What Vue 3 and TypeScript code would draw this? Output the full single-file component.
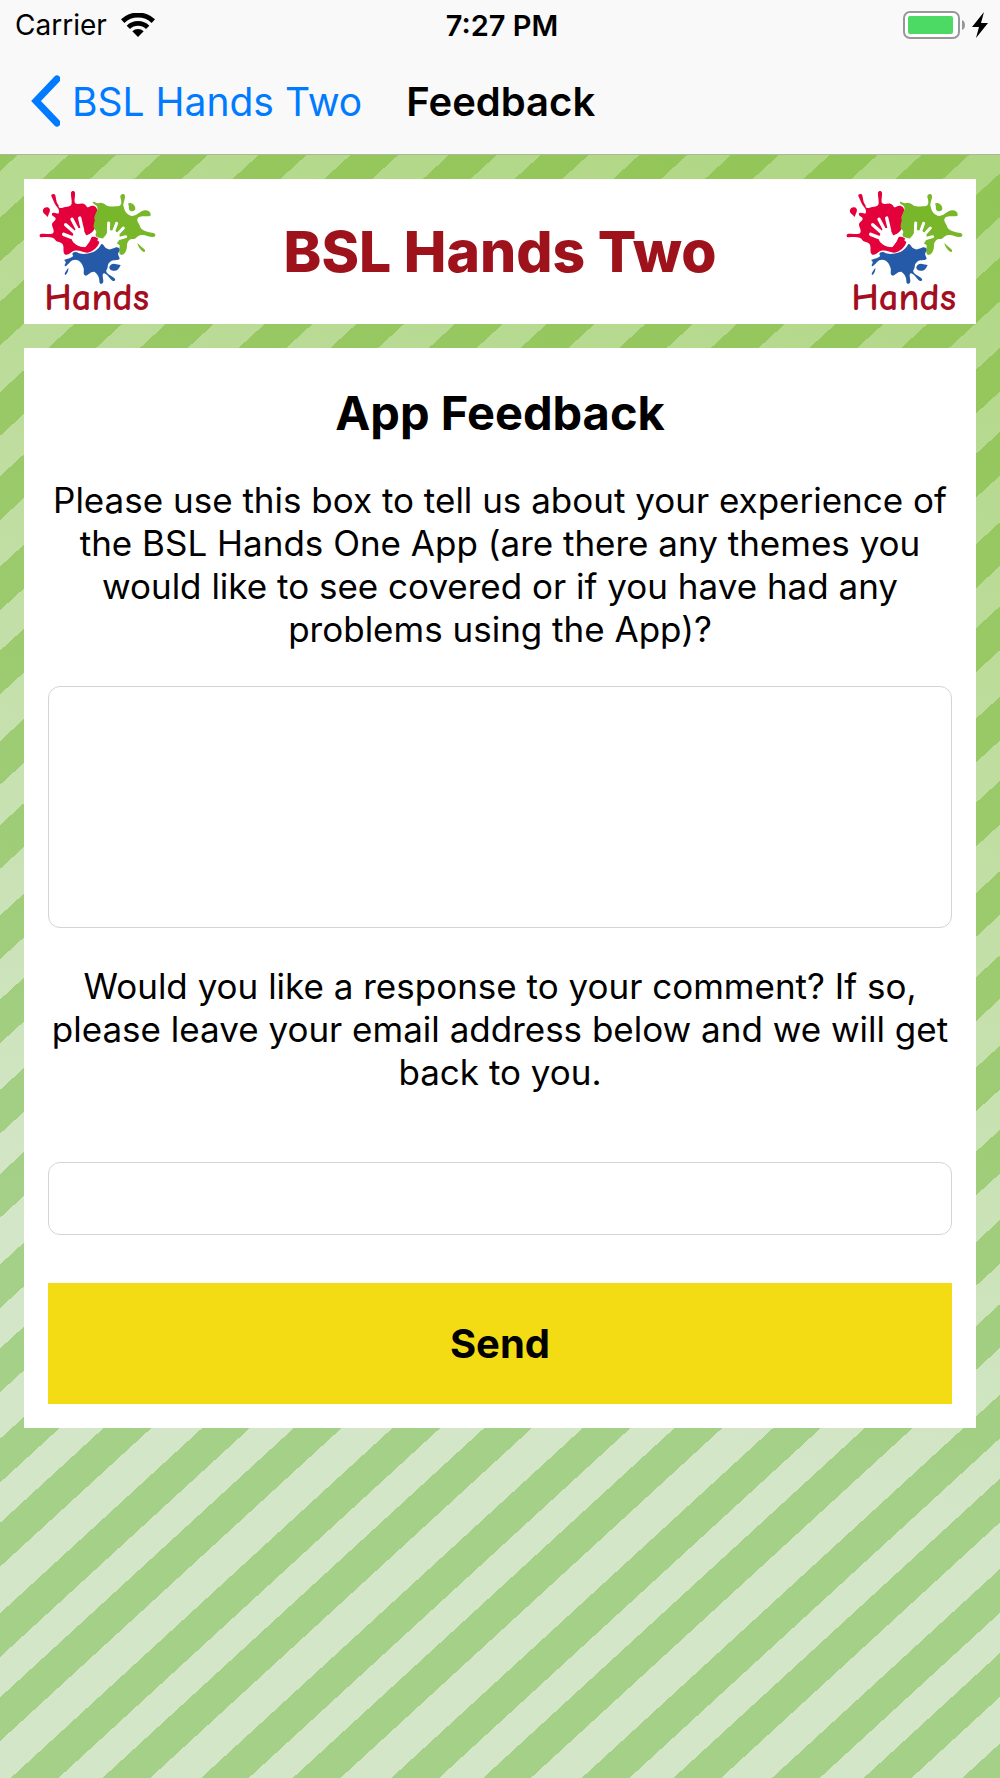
<script setup lang="ts">
import { h, ref, type FunctionalComponent } from 'vue'

const comment = ref('')
const email = ref('')

const red = '#e4003a'
const green = '#78b72a'
const blue = '#245aa8'

/** Logo: three paint splashes with white hand prints over the word "Hands". */
const HandsLogo: FunctionalComponent = () =>
  h('svg', { width: 145, height: 145, viewBox: '0 9 435 435', role: 'img', 'aria-label': 'Hands' }, [
    h('path', {
      fill: red,
      d: 'M82 60C80 53 92 51 94 58C97 70 96 80 104 88C102 96 108 97 116 95C128 92 142 94 143 82C144 72 140 60 141 50C142 43 152 43 153 50C154 62 149 75 154 82C161 88 171 80 180 84C190 88 186 98 196 92C207 85 221 92 219 105C218 115 211 118 213 128C217 137 211 145 214 155C208 163 203 172 204 182C214 181 227 186 226 198C224 212 205 229 190 230C176 230 165 220 148 225C140 228 134 239 124 236C114 231 122 214 116 205C109 195 101 201 94 192C88 182 76 182 52 184C45 183 45 174 52 173C68 172 82 178 88 170C93 160 79 148 86 140C97 132 98 126 88 121C78 113 87 107 97 112C107 116 106 105 103 98C99 91 93 87 91 80Z',
    }),
    h('path', { fill: red, d: 'M57 101C60 94 68 92 74 95C79 98 79 105 75 112L71 123C66 115 54 112 57 101Z' }),
    h('path', {
      fill: green,
      d: 'M206 78C210 74 217 84 226 81C237 77 243 87 251 90C261 93 272 89 279 91C294 92 294 78 289 64C287 54 301 50 303 60C304 72 294 84 300 95C302 108 312 118 325 120C341 119 345 106 362 103C375 101 383 112 379 120C368 123 355 118 344 124C335 132 343 140 347 148C350 163 365 168 388 171C397 173 396 184 386 183C371 183 363 174 348 178C336 183 335 191 325 189C318 187 309 197 309 208C309 222 303 236 293 237C282 236 287 222 287 208L270 196L220 184C208 178 222 170 212 160C203 148 216 138 211 127C211 115 223 105 220 92C216 86 208 86 206 78Z',
    }),
    h('path', { fill: green, d: 'M312 83C319 77 333 85 334 96C335 105 325 108 318 104C312 99 317 91 312 83Z' }),
    h('path', { fill: green, d: 'M340 201C344 204 349 210 353 213C361 219 367 224 361 228C354 229 342 212 340 201Z' }),
    h('path', {
      fill: blue,
      d: 'M120 252C132 247 142 247 148 240C140 231 151 226 159 229C170 236 187 235 205 229C219 224 226 214 232 204C239 202 239 212 247 217C257 224 266 218 276 214C288 213 289 223 284 229C279 236 287 242 287 249C280 255 267 249 258 258C248 266 254 275 247 283C245 291 255 296 265 302C275 307 277 315 267 315C257 310 252 296 241 292C233 292 237 303 238 315C238 325 228 327 226 317C227 305 221 295 212 288C201 285 195 297 186 299C175 298 181 286 179 277C174 258 160 247 145 253C137 257 130 270 124 271C116 266 133 262 120 252Z',
    }),
    h('path', { fill: blue, d: 'M256 273C260 263 269 262 277 265L290 267C286 274 284 283 273 284C264 285 255 281 256 273Z' }),
    h('path', { fill: blue, d: 'M133 275C134 284 129 294 124 297C118 293 128 283 133 275Z' }),
    h('g', { fill: '#fff', stroke: '#fff', 'stroke-linecap': 'round', 'stroke-linejoin': 'round' }, [
      h('path', { d: 'M146 182L156 160L174 156L186 180L205 172L196 196L184 212C168 212 153 206 146 194Z', 'stroke-width': 3 }),
      h('path', { fill: 'none', 'stroke-width': 10, d: 'M150 187L119 175M154 172L125 146M163 166L144 130M176 164L167 126M188 193L202 177L212 168' }),
      h('path', { d: 'M246 178L256 164L274 166L286 178L282 196L272 207C256 216 240 210 232 196Z', 'stroke-width': 3 }),
      h('path', { fill: 'none', 'stroke-width': 9, d: 'M253 176L254 141M266 174L278 142M276 180L298 156M280 189L305 182M247 202L225 192' }),
    ]),
    h('text', { x: 218, y: 402, class: 'logo-word', 'text-anchor': 'middle' }, 'Hands'),
  ])
</script>

<template>
  <div class="app">
    <header class="top">
      <div class="status">
        <div class="status-left">
          <span>Carrier</span>
          <svg width="34" height="24" viewBox="0 0 102 72" aria-hidden="true">
            <path d="M0 19A74 74 0 0 1 102 19L92 30A60 60 0 0 0 10 30Z" />
            <path d="M17 38A49 49 0 0 1 85 38L75 48A35 35 0 0 0 27 48Z" />
            <path d="M34 55A24 24 0 0 1 68 55L51 72Z" />
          </svg>
        </div>
        <span class="time">7:27 PM</span>
        <div class="status-right">
          <svg width="86" height="28" viewBox="0 0 86 28" aria-hidden="true">
            <rect x="1" y="1" width="55" height="26" rx="6" fill="#fff" stroke="#98989b" stroke-width="2" />
            <rect x="5" y="5" width="45" height="18" rx="2" fill="#4cd964" />
            <path d="M59 9Q62 10 62 14Q62 18 59 19Z" fill="#98989b" />
            <path d="M81 1L69 16H76L73 27L85 12H78Z" fill="#000" />
          </svg>
        </div>
      </div>
      <nav class="nav">
        <a class="back" href="#">
          <svg width="30" height="52" viewBox="0 0 30 52" aria-hidden="true">
            <path d="M27 4L6 26L27 48" fill="none" stroke="#007aff" stroke-width="7" stroke-linecap="round" stroke-linejoin="miter" />
          </svg>
          <span>BSL Hands Two</span>
        </a>
        <span class="nav-title">Feedback</span>
      </nav>
    </header>

    <main class="content">
      <svg class="stripes" width="100%" height="100%" aria-hidden="true">
        <defs>
          <linearGradient id="deep" gradientUnits="userSpaceOnUse" x1="1000" y1="0" x2="600" y2="1250">
            <stop offset="0" stop-color="#92c556" />
            <stop offset="0.5" stop-color="#9aca6a" />
            <stop offset="1" stop-color="#a4d088" />
          </linearGradient>
          <linearGradient id="pale" gradientUnits="userSpaceOnUse" x1="1000" y1="0" x2="600" y2="1250">
            <stop offset="0" stop-color="#aed681" />
            <stop offset="0.5" stop-color="#c0dea2" />
            <stop offset="1" stop-color="#d3e6c8" />
          </linearGradient>
          <linearGradient id="bands" gradientUnits="userSpaceOnUse" spreadMethod="repeat" x1="0" y1="0" x2="86.9" y2="94.8">
            <stop offset="0.092" stop-color="#000" />
            <stop offset="0.092" stop-color="#fff" />
            <stop offset="0.359" stop-color="#fff" />
            <stop offset="0.359" stop-color="#000" />
            <stop offset="0.61" stop-color="#000" />
            <stop offset="0.61" stop-color="#fff" />
            <stop offset="0.841" stop-color="#fff" />
            <stop offset="0.841" stop-color="#000" />
          </linearGradient>
          <mask id="band-mask" maskUnits="userSpaceOnUse" x="0" y="0" width="100%" height="100%">
            <rect width="100%" height="100%" fill="url(#bands)" />
          </mask>
        </defs>
        <rect width="100%" height="100%" fill="url(#deep)" />
        <rect width="100%" height="100%" fill="url(#pale)" mask="url(#band-mask)" />
      </svg>

      <section class="card banner">
        <HandsLogo />
        <h1>BSL Hands Two</h1>
        <HandsLogo />
      </section>

      <form class="card form" @submit.prevent>
        <h2>App Feedback</h2>
        <label for="comment">
          Please use this box to tell us about your experience of the BSL Hands One App (are there any
          themes you would like to see covered or if you have had any problems using the App)?
        </label>
        <textarea id="comment" v-model="comment"></textarea>
        <label class="email-label" for="email">
          Would you like a response to your comment? If so, please leave your email address below and we
          will get back to you.
        </label>
        <input id="email" v-model="email" type="email" />
        <button type="submit">Send</button>
      </form>
    </main>
  </div>
</template>

<style>
body {
  margin: 0;
}

.logo-word {
  font-family: "Comic Sans MS", "Comic Neue", "Open Sans", sans-serif;
  font-size: 116px;
  font-weight: 700;
  fill: #a30f1f;
}
</style>

<style scoped>
.app {
  display: flex;
  flex-direction: column;
  min-height: 100vh;
  font-family: Inter, "Liberation Sans", sans-serif;
  color: #000;
}

.top {
  background: #f9f9f9;
  border-bottom: 1px solid #a9b89b;
}

.status {
  display: grid;
  grid-template-columns: 1fr auto 1fr;
  align-items: center;
  height: 50px;
  padding: 0 11px 0 15px;
  font-size: 28px;
}

.status-left {
  display: flex;
  align-items: center;
  gap: 14px;
}

.status-right {
  display: flex;
  justify-content: flex-end;
}

.time {
  font-size: 29px;
  font-weight: 600;
}

.nav {
  display: flex;
  align-items: center;
  gap: 44px;
  height: 102px;
  padding: 0 30px 2px;
  font-size: 39px;
}

.back {
  display: flex;
  align-items: center;
  gap: 12px;
  color: #007aff;
  text-decoration: none;
}

.nav-title {
  font-size: 40px;
  font-weight: 600;
}

.content {
  position: relative;
  flex: 1;
  display: flex;
  flex-direction: column;
  gap: 24px;
  padding: 24px;
}

.stripes {
  position: absolute;
  inset: 0;
}

.card {
  position: relative;
  background: #fff;
}

.banner {
  display: flex;
  align-items: center;
  justify-content: space-between;
}

h1,
h2 {
  margin: 0;
  font-weight: 700;
}

h1 {
  font-size: 57px;
  font-weight: 800;
  color: #9d121b;
}

.form {
  display: flex;
  flex-direction: column;
  padding: 24px;
  text-align: center;
}

h2 {
  padding: 13px 0 25px;
  font-size: 47px;
  line-height: 56px;
}

label {
  padding: 13px 0 35px;
  font-size: 35px;
  line-height: 43px;
}

.email-label {
  padding: 37px 0 68px;
}

textarea,
input {
  box-sizing: border-box;
  width: 100%;
  margin: 0;
  padding: 12px;
  border: 1px solid #d4d4d4;
  border-radius: 12px;
  background: #fff;
  font: inherit;
  font-size: 35px;
  resize: none;
}

textarea {
  height: 242px;
}

input {
  height: 73px;
}

button {
  height: 121px;
  margin-top: 48px;
  border: 0;
  background: #f4dc14;
  color: #000;
  font: inherit;
  font-size: 40px;
  font-weight: 700;
}
</style>
